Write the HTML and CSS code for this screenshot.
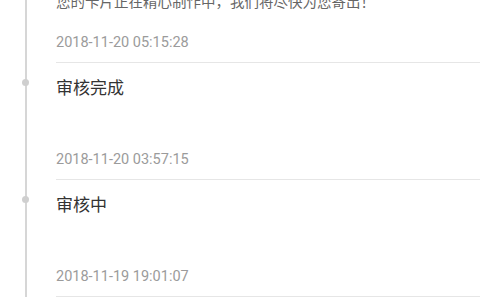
FILE: index.html
```html
<!DOCTYPE html>
<html lang="zh-CN">
<head>
  <meta charset="UTF-8">
  <meta name="viewport" content="width=device-width, initial-scale=1.0">
  <title>订单进度</title>
  <link rel="stylesheet" href="styles.css">
</head>
<body>
  <section class="timeline">
    <div class="node">
      <h3 class="node-title">制作中</h3>
      <p class="node-desc">您的卡片正在精心制作中，我们将尽快为您寄出！</p>
      <p class="node-time">2018-11-20 05:15:28</p>
    </div>
    <div class="node">
      <h3 class="node-title">审核完成</h3>
      <p class="node-desc"></p>
      <p class="node-time">2018-11-20 03:57:15</p>
    </div>
    <div class="node">
      <h3 class="node-title">审核中</h3>
      <p class="node-desc"></p>
      <p class="node-time">2018-11-19 19:01:07</p>
    </div>
  </section>
</body>
</html>
```

FILE: styles.css
```css
* {
  padding: 0;
  margin: 0;
}
html, body {
  background-color: #fff;
  overflow: hidden;
}
body {
  font-family: Roboto, "Noto Sans CJK SC", sans-serif;
}
.timeline {
  /* page is scrolled a bit, first node is half hidden */
  margin-top: -54px;
  margin-left: 25px;
  padding-left: 29px;
  border-left: 2px solid #d6d6d6;
}
.node {
  position: relative;
  padding: 13px 0 9px;
  border-bottom: 1px solid #e6e6e6;
}
.node::before {
  content: "";
  position: absolute;
  left: -34px;
  top: 16px;
  width: 7px;
  height: 7px;
  border-radius: 50%;
  background-color: #cfcfcf;
}
.node-title {
  font-size: 17px;
  font-weight: normal;
  line-height: 24px;
  color: #333;
}
.node-desc {
  min-height: 20px;
  padding: 10px 0 20px;
  font-size: 14.5px;
  line-height: 20px;
  color: #666;
}
.node-time {
  font-size: 14.5px;
  line-height: 20px;
  color: #9b9b9b;
}
```
